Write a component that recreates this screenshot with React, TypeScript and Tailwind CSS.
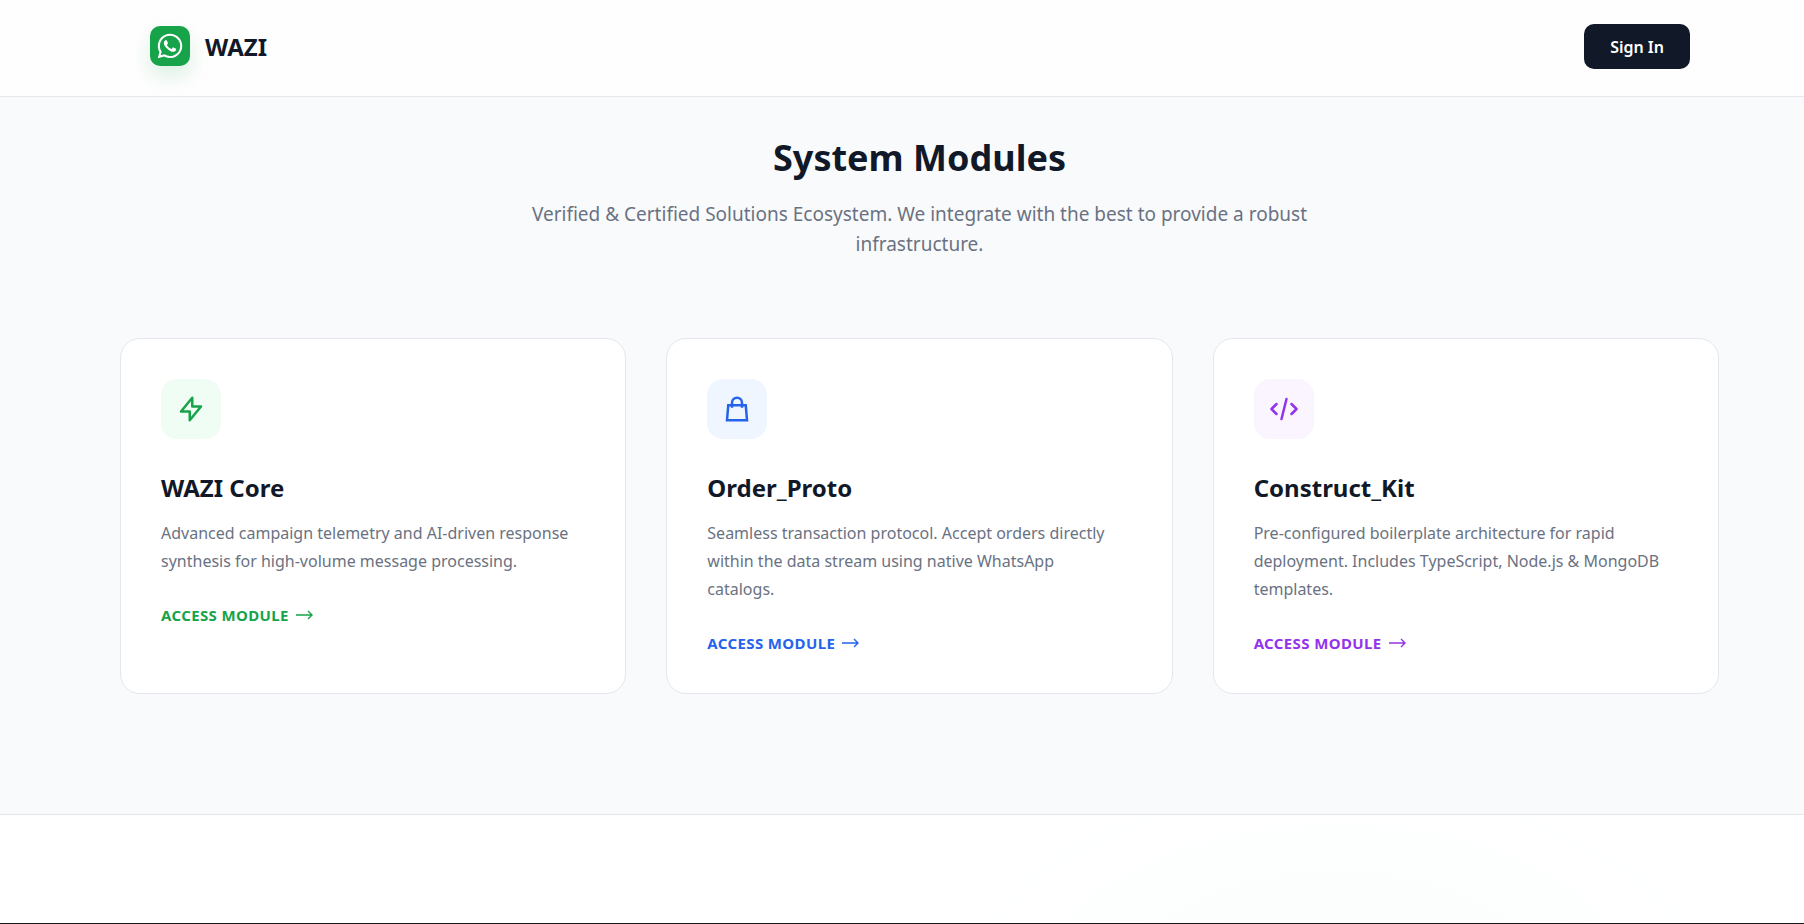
import { FaWhatsapp } from "react-icons/fa";

interface ModuleType {
    title: string;
    description: string;
    iconPath: string;
    iconClass: string;
    linkClass: string;
}

const modules: ModuleType[] = [
    {
        title: "WAZI Core",
        description: "Advanced campaign telemetry and AI-driven response synthesis for high-volume message processing.",
        iconPath: "M13 10V3L4 14h7v7l9-11h-7z",
        iconClass: "bg-green-50 text-[#16a34a]",
        linkClass: "text-[#16a34a]",
    },
    {
        title: "Order_Proto",
        description: "Seamless transaction protocol. Accept orders directly within the data stream using native WhatsApp catalogs.",
        iconPath: "M16 11V7a4 4 0 00-8 0v4M5 9h14l1 12H4L5 9z",
        iconClass: "bg-blue-50 text-[#2563eb]",
        linkClass: "text-[#2563eb]",
    },
    {
        title: "Construct_Kit",
        description: "Pre-configured boilerplate architecture for rapid deployment. Includes TypeScript, Node.js & MongoDB templates.",
        iconPath: "M10 20l4-16m4 4l4 4-4 4M6 16l-4-4 4-4",
        iconClass: "bg-purple-50 text-[#9333ea]",
        linkClass: "text-[#9333ea]",
    },
];

const Header = () => (
    <header className="border-b border-gray-200 bg-[#fefefe] pt-6 pb-[27px] pl-[150px] pr-[114px]">
        <div className="flex items-start justify-between">
            <a href="#" className="flex h-11 items-center gap-[15px]">
                <span className="flex size-10 items-center justify-center rounded-[10px] bg-[#16a34a] text-white shadow-[0_10px_20px_rgba(22,163,74,0.15)]">
                    <FaWhatsapp size={28} />
                </span>
                <span className="pt-[2px] text-[24px] leading-[40px] font-bold">WAZI</span>
            </a>
            <button type="button" className="h-[45px] rounded-[10px] bg-[#111827] px-[26px] text-[16px] font-semibold text-white">
                Sign In
            </button>
        </div>
    </header>
);

const ModuleCard = ({ module }: { module: ModuleType }) => (
    <article className="rounded-[20px] border border-gray-200 bg-white p-10">
        <div className={`mb-[30px] flex size-[60px] items-center justify-center rounded-2xl ${module.iconClass}`}>
            <svg className="size-[30px]" viewBox="0 0 24 24" fill="none" stroke="currentColor" strokeWidth="2" aria-hidden="true">
                <path
                    d={module.iconPath}
                    strokeLinecap={module.title === "Order_Proto" ? "butt" : "round"}
                    strokeLinejoin={module.title === "Order_Proto" ? "miter" : "round"}
                />
            </svg>
        </div>
        <h3 className="mb-3 text-[24px] leading-[38px] font-bold">{module.title}</h3>
        <p className="mb-[30px] max-w-[415px] text-[16px] leading-[28px] text-gray-500">{module.description}</p>
        <a href="#" className={`flex w-fit items-center gap-[7px] text-[15px] leading-[20px] font-bold tracking-wide ${module.linkClass}`}>
            ACCESS MODULE
            <svg className="h-[10px] w-[17px]" viewBox="0 0 17 10" fill="none" stroke="currentColor" aria-hidden="true">
                <path d="M0 5h16M12 1l4 4-4 4" strokeWidth="1.4" />
            </svg>
        </a>
    </article>
);

const App = () => {
    return (
        <div className="flex min-h-screen flex-col overflow-hidden border-b border-[#1a1a1a] bg-white font-['Noto_Sans','Open_Sans',sans-serif] text-[#111827]">
            <Header />

            {/* MODULES */}
            <main className="border-b border-gray-200 bg-[#f9fafc] pt-[31px] pb-[120px] pl-[120px] pr-[85px]">
                <div className="mx-auto mb-[79px] max-w-[800px] text-center">
                    <h1 className="mb-[11px] text-[36px] leading-[60px] font-bold">System Modules</h1>
                    <p className="text-[19px] leading-[30px] text-gray-500">
                        Verified &amp; Certified Solutions Ecosystem. We integrate with the best to provide a robust infrastructure.
                    </p>
                </div>
                <div className="grid grid-cols-3 gap-10">
                    {modules.map((m) => (
                        <ModuleCard key={m.title} module={m} />
                    ))}
                </div>
            </main>

            {/* GLOW */}
            <div className="grow bg-[radial-gradient(ellipse_440px_240px_at_74%_160%,rgba(16,185,129,0.02),transparent)]" />
        </div>
    );
};

export default App;
